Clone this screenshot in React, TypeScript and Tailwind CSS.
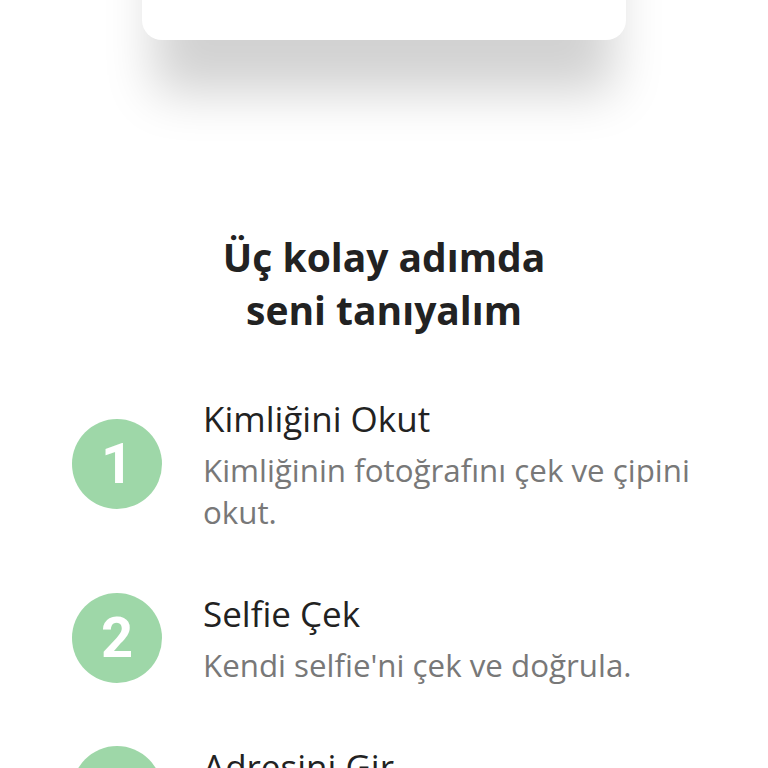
const steps = [
  { no: "1", title: "Kimliğini Okut", desc: "Kimliğinin fotoğrafını çek ve çipini okut." },
  { no: "2", title: "Selfie Çek", desc: "Kendi selfie'ni çek ve doğrula." },
  { no: "3", title: "Adresini Gir", desc: "Adres bilgilerini gir ve onayla." },
];

const StepRow = ({ no, title, desc }: { no: string; title: string; desc: string }) => (
  <div className="flex items-center gap-[41px]">
    <div className="flex h-[90px] w-[90px] shrink-0 items-center justify-center rounded-full bg-[#9ed7a8]">
      <span className="text-[56px] font-bold leading-none text-white" style={{ fontFamily: "Roboto, sans-serif" }}>
        {no}
      </span>
    </div>
    <div className="min-w-0 flex-1">
      <p className="text-[35px] leading-[48px] text-[#222222]">{title}</p>
      <p className="mt-[6px] text-[31.3px] leading-[42px] text-[#787878]">{desc}</p>
    </div>
  </div>
);

export default function App() {
  return (
    <div
      className="flex min-h-[768px] w-full flex-col overflow-hidden bg-white"
      style={{ fontFamily: '"Open Sans", sans-serif' }}
    >
      {/* card scrolled mostly off the top */}
      <div className="-mt-[200px] flex justify-center">
        <div className="h-[240px] w-[484px] rounded-[20px] bg-white shadow-[0_65px_50px_-12px_rgba(0,0,0,0.18)]" />
      </div>

      <h2 className="mt-[190px] text-center text-[39px] font-bold leading-[53px] text-[#222222]">
        Üç kolay adımda
        <br />
        seni tanıyalım
      </h2>

      <div className="mt-[59px] flex flex-col gap-[57px] pl-[72px] pr-[44px]">
        {steps.map(s => (
          <StepRow key={s.no} {...s} />
        ))}
      </div>
    </div>
  );
}
